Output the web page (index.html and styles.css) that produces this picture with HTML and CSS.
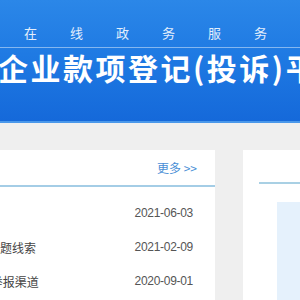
FILE: index.html
```html
<!DOCTYPE html>
<html lang="zh-CN">
<head>
    <meta charset="UTF-8">
    <meta name="viewport" content="width=device-width, initial-scale=1.0">
    <title>企业款项登记(投诉)平台</title>
    <link rel="stylesheet" href="styles.css">
</head>
<body>
    <header class="banner">
        <div class="banner-sub">在线政务服务平台</div>
        <h1 class="banner-title">企业款项登记(投诉)平台</h1>
    </header>

    <main class="content">
        <section class="card news">
            <div class="card-head">
                <span class="more">更多 &gt;&gt;</span>
            </div>
            <ul class="news-list">
                <li class="news-item">
                    <span class="news-title">工作动态通知公告</span>
                    <span class="news-date">2021-06-03</span>
                </li>
                <li class="news-item">
                    <span class="news-title">公开征集违约拖欠账款问题线索</span>
                    <span class="news-date">2021-02-09</span>
                </li>
                <li class="news-item">
                    <span class="news-title">公开违约拖欠款项投诉 举报渠道</span>
                    <span class="news-date">2020-09-01</span>
                </li>
            </ul>
        </section>

        <aside class="card side">
            <div class="side-head"></div>
            <div class="side-box"></div>
        </aside>
    </main>
</body>
</html>
```

FILE: styles.css
```css
body {
    margin: 0;
    overflow: hidden;
    background-color: #efefef;
    font-family: "Noto Sans CJK SC", "Liberation Sans", sans-serif;
}

/* top banner */
.banner {
    height: 123px;
    padding-top: 24px;
    box-sizing: border-box;
    background: linear-gradient(180deg, #2b87e8 0%, #1f7ae3 45%, #1569da 100%);
    border-bottom: 2px solid #4a98ea;
    overflow: hidden;
    white-space: nowrap;
    color: #fff;
}
.banner-sub {
    padding: 0 0 5px 24px;
    font-size: 13px;
    line-height: 18px;
    letter-spacing: 33px;
    color: #e2eefc;
    border-bottom: 1px solid rgba(255, 255, 255, 0.45);
}
.banner-title {
    margin: 2px 0 0 -2px;
    font-size: 30px;
    line-height: 34px;
    font-weight: bold;
    letter-spacing: 2.5px;
}

/* cards */
.content {
    display: flex;
    gap: 28px;
    padding-top: 27px;
}
.card {
    background-color: #fff;
    height: 200px;
}
.news {
    width: 215px;
    flex-shrink: 0;
}
.card-head {
    height: 35px;
    display: flex;
    justify-content: flex-end;
    align-items: center;
    padding-right: 18px;
    border-bottom: 2px solid #a4cde6;
}
.more {
    font-size: 12px;
    color: #4a8fd6;
}
.news-list {
    list-style: none;
    margin: 0;
    padding: 9px 0 0 0;
}
.news-item {
    display: flex;
    align-items: center;
    height: 34px;
    padding-right: 22px;
    font-size: 12px;
    color: #444;
}
.news-title {
    flex: 1;
    margin-left: -132px;
    white-space: nowrap;
}
.news-date {
    font-family: "Liberation Sans", sans-serif;
    letter-spacing: -0.3px;
    color: #555;
}

.side {
    flex: 1;
    min-width: 0;
    padding: 0 0 0 16px;
}
.side-head {
    height: 32px;
    border-bottom: 2px solid #a9d0e4;
}
.side-box {
    margin: 18px 0 0 18px;
    height: 120px;
    background-color: #e5f1fc;
}
```
